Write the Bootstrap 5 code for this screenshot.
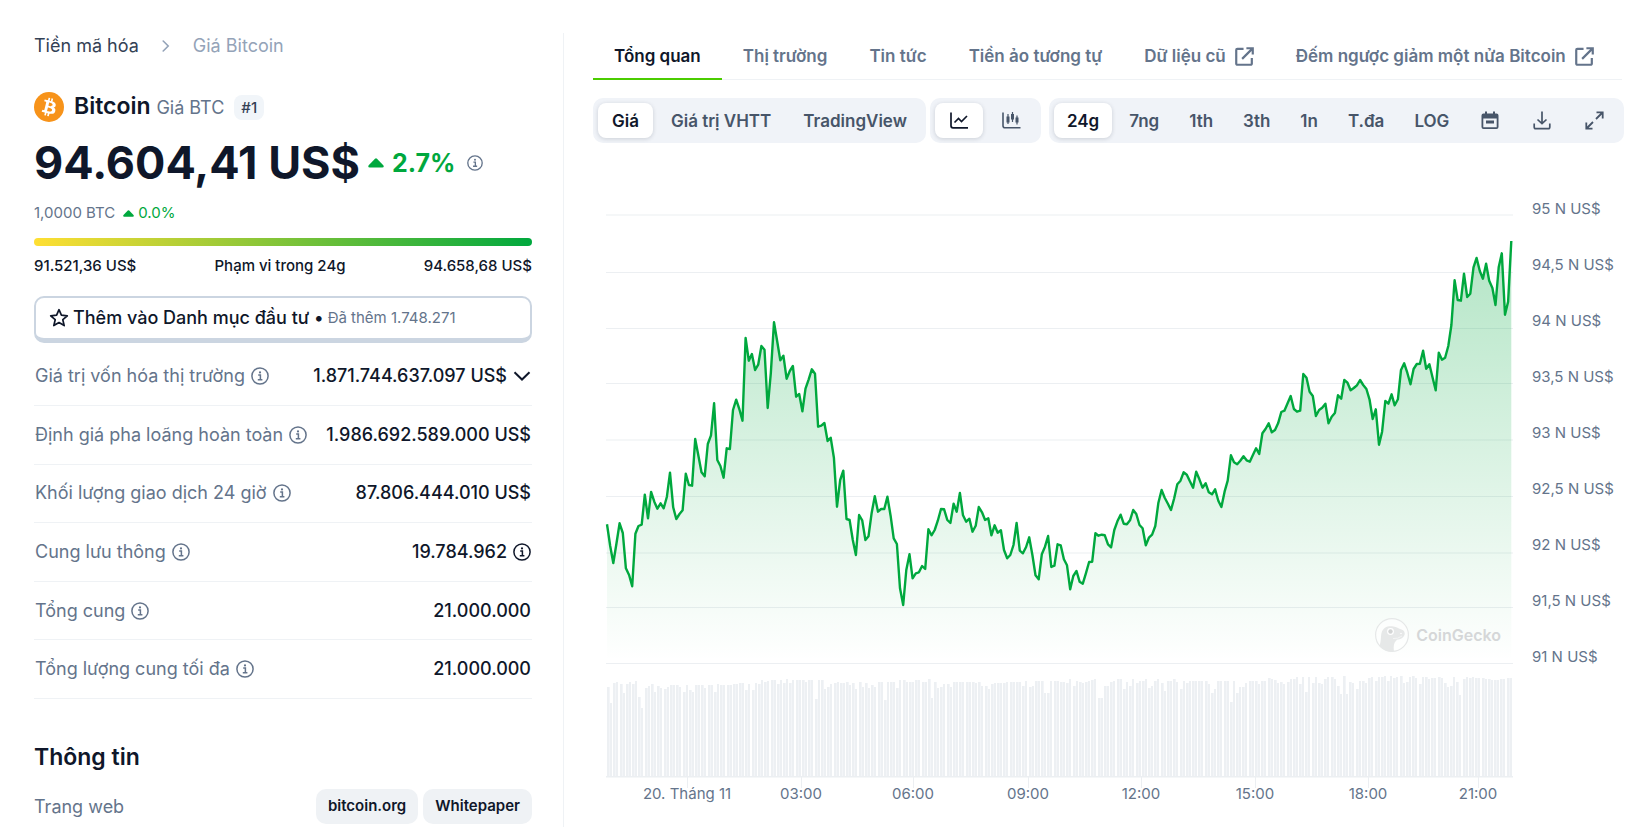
<!DOCTYPE html>
<html lang="vi">
<head>
<meta charset="utf-8">
<meta name="viewport" content="width=device-width, initial-scale=1">
<title>Giá Bitcoin</title>
<link href="https://cdn.jsdelivr.net/npm/bootstrap@5.3.0/dist/css/bootstrap.min.css" rel="stylesheet">
<style>
:root{--ink:#0f172a;--mid:#475569;--mute:#64748b;--pale:#94a3b8;--up:#00a83e;--fill:#eff2f5;--line:#eff2f5}
body{font-family:Inter,"Noto Sans",sans-serif;font-size:18px;line-height:24px;color:var(--ink);background:#fff}
a{color:inherit;text-decoration:none}
svg{flex:none;display:block}
.page{display:grid;grid-template-columns:564fr 1075fr;padding-top:33px;min-height:100vh;overflow:hidden}
.side{padding:1px 31px 0 34px;border-right:1px solid var(--line)}
.main{padding:0 17px 0 29px;min-width:0}
.crumbs{gap:23px;color:#334155}
.crumbs .here{color:var(--pale)}
.coin{gap:10px;margin-top:35px;height:28px}
.coin h1{font-size:23px;line-height:28px;font-weight:600;margin:0}
.coin h1 small{font-size:18px;font-weight:400;color:var(--mute)}
.rank{background:#f1f5f9;border-radius:8px;font-size:15px;font-weight:500;line-height:25px;padding:0 7px;color:#334155}
.price{font-size:45px;font-weight:700;line-height:56px}
.price-row{margin-top:14px}
.change{font-size:25px;font-weight:700;line-height:32px}
.up{color:var(--up)}
.mute{color:var(--mute)}
.inbtc{font-size:15px;line-height:22px;margin-top:11px}
.range-bar{height:8px;border-radius:4px;background:linear-gradient(90deg,#ffdf33,#00a83e);margin-top:14px}
.range-text{font-size:15px;font-weight:500;line-height:22px;margin-top:9px}
.follow{width:100%;margin-top:19px;height:47px;border:2px solid #cbd5e1;border-bottom-width:5px;border-radius:10px;background:#fff;padding:0 13px;font-weight:500;color:var(--ink);gap:4px}
.follow span{font-size:15px;font-weight:400;color:var(--mute)}
.stats{width:100%;height:351px;margin-top:5px}
.stats th,.stats td{border-bottom:1px solid var(--line);padding:0 1px;vertical-align:middle;font-weight:400}
.stats th{color:var(--mute)}
.stats td{font-weight:500}
.stats div{gap:6px}
.about{font-size:23px;font-weight:600;line-height:28px;margin:44px 0 18px}
.links{gap:5px}
.chip{background:var(--fill);border:0;border-radius:10px;height:35px;line-height:33px;padding:0 12px;font-size:15px;font-weight:600}
.tabs{height:47px;border-bottom:1px solid var(--line);font-size:17px}
.tabs a{height:47px;line-height:46px;padding:0 21px;font-weight:600;color:var(--mute);gap:9px;white-space:nowrap}
.tabs a.on{color:var(--ink);border-bottom:2px solid #4bcc00}
.controls{margin-top:18px;font-size:17px}
.seg{background:#f0f3f8;border-radius:10px;padding:5px;gap:4px}
.seg button{border:0;background:none;height:35px;border-radius:8px;padding:0 13px;font-weight:600;color:var(--mid);white-space:nowrap}
.seg button.on{background:#fff;color:var(--ink);box-shadow:0 1px 4px rgba(15,23,42,.16)}
.seg.kind button{padding:0 14px}
.seg .tool{padding:0 15px}
.chart{display:grid;grid-template-columns:1fr 109px;margin-top:38px;padding-left:13px}
.plot{min-width:0}
.plot svg.graph{width:100%;height:603px;overflow:visible}
.axis-x{display:grid;grid-template-columns:81fr 114fr 112fr 115fr 113fr 114fr 113fr 110fr 35fr;font-size:15px;line-height:20px;color:var(--mute)}
.axis-x span{display:flex;justify-content:center;width:0;white-space:nowrap}
.axis-x span:first-child{grid-column-start:2}
.axis-y{font-size:15px;line-height:56px;color:var(--mute);padding-left:19px}
.brand-tag{right:12px;top:437px;gap:7px;color:#d5d7d8;font-size:16px;font-weight:600}
</style>
</head>
<body>
<svg width="0" height="0" class="position-absolute" aria-hidden="true">
  <symbol id="info" viewBox="0 0 18 18"><circle cx="9" cy="9" r="8.1" fill="none" stroke="currentColor" stroke-width="1.5"/><path d="M7.2 8h2.2v4.4M6.8 12.7h4.6" fill="none" stroke="currentColor" stroke-width="1.5"/><circle cx="9" cy="5.4" r="1.1" fill="currentColor"/></symbol>
  <symbol id="out" viewBox="0 0 20 20"><path d="M9 2H2.5A1.2 1.2 0 0 0 1.300 3.200V17.500A1.200 1.200 0 0 0 2.500 18.700H16.500A1.200 1.200 0 0 0 17.700 17.500V11.500M12 1.300H18.700V8M18.300 1.700L7.500 12.500" fill="none" stroke="currentColor" stroke-width="2.3"/></symbol>
  <symbol id="tri" viewBox="0 0 16 10"><path d="M7 .7q1-.9 2 0l6.300 6.500q1.300 2.400-1 2.400H1.700q-2.300 0-1-2.400z" fill="currentColor"/></symbol>
</svg>

<div class="page">
  <aside class="side">
    <nav class="crumbs d-flex align-items-center" aria-label="breadcrumb">
      <a href="#">Tiền mã hóa</a>
      <svg width="8" height="12" viewBox="0 0 8 12"><path d="M1.200 1l5 5-5 5" fill="none" stroke="#94a3b8" stroke-width="1.600" stroke-linecap="round"/></svg>
      <span class="here">Giá Bitcoin</span>
    </nav>

    <div class="coin d-flex align-items-center">
      <svg width="30" height="30" viewBox="0 0 32 32"><circle cx="16" cy="16" r="16" fill="#f7931a"/><path fill="#fff" d="M23.189 14.02c.314-2.096-1.283-3.223-3.465-3.975l.708-2.84-1.728-.43-.69 2.765c-.454-.114-.92-.22-1.385-.326l.695-2.783L15.596 6l-.708 2.839c-.376-.086-.746-.17-1.104-.26l.002-.009-2.384-.595-.46 1.846s1.283.294 1.256.312c.7.175.826.638.805 1.006l-.806 3.235c.048.012.11.03.18.057l-.183-.045-1.13 4.532c-.086.212-.303.531-.793.41.018.025-1.256-.313-1.256-.313l-.858 1.978 2.250.561c.418.105.828.215 1.231.318l-.715 2.872 1.727.43.708-2.840c.472.127.93.245 1.378.357l-.706 2.828 1.728.43.715-2.866c2.948.558 5.164.333 6.097-2.333.752-2.146-.037-3.385-1.588-4.192 1.130-.26 1.980-1.003 2.207-2.538zm-3.950 5.538c-.533 2.147-4.148.986-5.320.695l.950-3.805c1.172.293 4.929.872 4.370 3.110zm.535-5.569c-.487 1.953-3.495.96-4.470.717l.860-3.450c.975.243 4.118.696 3.610 2.733z"/></svg>
      <h1>Bitcoin <small>Giá BTC</small></h1>
      <span class="rank">#1</span>
    </div>

    <div class="price-row d-flex align-items-center gap-2">
      <div class="price">94.604,41&nbsp;US$</div>
      <div class="change up d-flex align-items-center gap-2"><svg width="16" height="10"><use href="#tri"/></svg>2.7%</div>
      <svg class="mute ms-1" width="16" height="16" viewBox="0 0 18 18"><use href="#info"/></svg>
    </div>
    <div class="inbtc mute d-flex align-items-center gap-2">1,0000 BTC <span class="up d-flex align-items-center gap-1"><svg width="11" height="7" viewBox="0 0 16 10"><use href="#tri"/></svg>0.0%</span></div>

    <div class="range-bar"></div>
    <div class="range-text d-flex justify-content-between"><span>91.521,36 US$</span><span>Phạm vi trong 24g</span><span>94.658,68 US$</span></div>

    <button type="button" class="follow d-flex align-items-center">
      <svg width="20" height="20" viewBox="0 0 20 20"><path d="M10 1.700l2.400 5.500 5.900.6-4.500 3.900 1.400 5.900-5.200-3.100-5.200 3.100 1.400-5.900-4.500-3.900 5.900-.6z" fill="none" stroke="currentColor" stroke-width="1.700" stroke-linejoin="round"/></svg>
      Thêm vào Danh mục đầu tư • <span>Đã thêm 1.748.271</span>
    </button>

    <table class="stats">
      <tr><th scope="row"><div class="d-flex align-items-center">Giá trị vốn hóa thị trường <svg width="18" height="18"><use href="#info"/></svg></div></th><td><div class="d-flex align-items-center justify-content-end">1.871.744.637.097 US$ <svg width="18" height="10" viewBox="0 0 18 10"><path d="M1.500 1.200L9 8.500l7.500-7.300" fill="none" stroke="currentColor" stroke-width="2"/></svg></div></td></tr>
      <tr><th scope="row"><div class="d-flex align-items-center">Định giá pha loãng hoàn toàn <svg width="18" height="18"><use href="#info"/></svg></div></th><td class="text-end">1.986.692.589.000 US$</td></tr>
      <tr><th scope="row"><div class="d-flex align-items-center">Khối lượng giao dịch 24 giờ <svg width="18" height="18"><use href="#info"/></svg></div></th><td class="text-end">87.806.444.010 US$</td></tr>
      <tr><th scope="row"><div class="d-flex align-items-center">Cung lưu thông <svg width="18" height="18"><use href="#info"/></svg></div></th><td><div class="d-flex align-items-center justify-content-end">19.784.962 <svg width="18" height="18"><use href="#info"/></svg></div></td></tr>
      <tr><th scope="row"><div class="d-flex align-items-center">Tổng cung <svg width="18" height="18"><use href="#info"/></svg></div></th><td class="text-end">21.000.000</td></tr>
      <tr><th scope="row"><div class="d-flex align-items-center">Tổng lượng cung tối đa <svg width="18" height="18"><use href="#info"/></svg></div></th><td class="text-end">21.000.000</td></tr>
    </table>

    <h2 class="about">Thông tin</h2>
    <div class="links d-flex align-items-center">
      <span class="mute me-auto">Trang web</span>
      <a href="#" class="chip">bitcoin.org</a>
      <a href="#" class="chip">Whitepaper</a>
    </div>
  </aside>

  <main class="main">
    <nav class="tabs d-flex">
      <a href="#" class="on">Tổng quan</a>
      <a href="#">Thị trường</a>
      <a href="#">Tin tức</a>
      <a href="#">Tiền ảo tương tự</a>
      <a href="#" class="d-flex">Dữ liệu cũ <svg class="align-self-center" width="19" height="19"><use href="#out"/></svg></a>
      <a href="#" class="d-flex">Đếm ngược giảm một nửa Bitcoin <svg class="align-self-center" width="19" height="19"><use href="#out"/></svg></a>
    </nav>

    <div class="controls d-flex">
      <div class="seg kind d-flex me-1">
        <button type="button" class="on">Giá</button>
        <button type="button">Giá trị VHTT</button>
        <button type="button">TradingView</button>
      </div>
      <div class="seg d-flex me-2">
        <button type="button" class="on tool" aria-label="Biểu đồ đường"><svg width="18" height="17" viewBox="0 0 18 17"><path d="M1 .5v13.300q0 2 2 2h15M4.500 10.500l4-4 3 3 5.500-5.500" fill="none" stroke="currentColor" stroke-width="1.700"/></svg></button>
        <button type="button" class="tool" aria-label="Biểu đồ nến"><svg width="19" height="17" viewBox="0 0 19 17"><path d="M1 .5v13.300q0 2 2 2h15.500" fill="none" stroke="currentColor" stroke-width="1.600"/><path d="M6 2v10M10.500 0v10M15 3.500v9" stroke="currentColor" stroke-width="1.200"/><path d="M4.500 4.500h3v6h-3zM9 2h3v5.500H9zM13.500 5.500h3v5h-3z" fill="currentColor"/></svg></button>
      </div>
      <div class="seg d-flex justify-content-between flex-grow-1">
        <button type="button" class="on">24g</button>
        <button type="button">7ng</button>
        <button type="button">1th</button>
        <button type="button">3th</button>
        <button type="button">1n</button>
        <button type="button">T.đa</button>
        <button type="button">LOG</button>
        <button type="button" class="tool" aria-label="Chọn ngày"><svg width="18" height="19" viewBox="0 0 18 19"><path d="M2.500 2.500H4V.5h2v2h6v-2h2v2h1.500a2 2 0 0 1 2 2v11.500a2 2 0 0 1-2 2h-13a2 2 0 0 1-2-2V4.500a2 2 0 0 1 2-2zM2.300 7.500v8.700h13.400V7.500zM5 9.500h8v3H5z" fill="currentColor" fill-rule="evenodd"/></svg></button>
        <button type="button" class="tool" aria-label="Tải xuống"><svg width="18" height="19" viewBox="0 0 18 19"><path d="M9 .5v12M4.500 8.500L9 12.700l4.500-4.200M1.200 12.500v3.500q0 1.700 1.700 1.700h12.200q1.700 0 1.700-1.700v-3.500" fill="none" stroke="currentColor" stroke-width="1.700"/></svg></button>
        <button type="button" class="tool" aria-label="Toàn màn hình"><svg width="19" height="19" viewBox="0 0 19 19"><path d="M11.500 1.300h6.200v6.200M17.500 1.500l-6.500 6.500M7.500 17.700H1.300v-6.200M1.500 17.500L8 11" fill="none" stroke="currentColor" stroke-width="1.800"/></svg></button>
      </div>
    </div>

    <div class="chart">
      <div class="plot position-relative">
        <svg class="graph" viewBox="0 0 907 603" preserveAspectRatio="none" role="img" aria-label="Biểu đồ giá Bitcoin 24 giờ">
          <defs><linearGradient id="fade" gradientUnits="userSpaceOnUse" x1="0" y1="60" x2="0" y2="480"><stop offset="0" stop-color="#00a83e" stop-opacity=".3"/><stop offset="1" stop-color="#00a83e" stop-opacity="0"/></linearGradient></defs>
          <g id="grid" fill="#eceff2"></g>
          <g id="volume" shape-rendering="crispEdges"></g>
          <path id="area" fill="url(#fade)"/>
          <path id="price" fill="none" stroke="#00a83e" stroke-width="2.400" stroke-linejoin="round" vector-effect="non-scaling-stroke"/>
        </svg>
        <div class="brand-tag position-absolute d-flex align-items-center">
          <svg width="34" height="34" viewBox="0 0 34 34"><circle cx="17" cy="17" r="16.400" fill="#fff" fill-opacity=".6" stroke="#e6e8e8" stroke-width="1.200"/><path d="M4.500 28c2-6 1-9 2-13 1.500-6 7-7.500 12-6.500 3 .5 5 2 8 3 3.500 1.200 3.500 4 3 5.500-1 2.500-3.500 4.500-7.500 4.700-2.500 2.300-4 5-3 11.500A16 16 0 0 1 4.500 28z" fill="#e6e8e8"/><circle cx="15.500" cy="13.500" r="3.400" fill="#fff"/><circle cx="15.500" cy="13.500" r="2.200" fill="#d3d5d5"/><circle cx="26" cy="15.500" r=".8" fill="#fff"/><path d="M18 20.500q5 .5 9-2.500" stroke="#f4f5f5" fill="none"/></svg>
          CoinGecko
        </div>
        <div class="axis-x"><span>20. Tháng 11</span><span>03:00</span><span>06:00</span><span>09:00</span><span>12:00</span><span>15:00</span><span>18:00</span><span>21:00</span></div>
      </div>
      <div class="axis-y">
        <div>95 N US$</div><div>94,5 N US$</div><div>94 N US$</div><div>93,5 N US$</div><div>93 N US$</div><div>92,5 N US$</div><div>92 N US$</div><div>91,5 N US$</div><div>91 N US$</div>
      </div>
    </div>
  </main>
</div>

<script src="https://cdn.jsdelivr.net/npm/bootstrap@5.3.0/dist/js/bootstrap.bundle.min.js"></script>
<script>
// Five-minute samples over 24 hours, in thirds of a chart unit below each block's base.
const priceBlocks = [
  [129, [643,708,759,700,640,669,775,795,829,671,648,644,554,625,546,575,596,580,595,560,488,592,627,612,601,491,525,527,387,437,487,499,402,376,280,450,468,503,415,417,300,269,297,332,84,152,132,180,164,108,119,294,190,37,92,151,137,206,183,168,260,252,304,236,208,178,191,350,347,339,393,383,443,590,510,482,627,630,690,735,615,631,690,679,608,559,605,597,597,560,617]],
  [249, [325,342,475,525,420,373,445,430,427,408,417,298,316,300,272,237,238,270,279,221,245,189,256,275,266,305,287,231,247,270,265,316,286,308,301,360,385,375,345,279,362,370,351,322,375,436,448,373,350,318,411,407,343,346,388,406,478,438,423,455,461,430,396,395,310,317,314,316,343,352,300,274,254,281,283,271,240,252,285,295,346,323,314,288,218,180,203,221,240,205,163]],
  [159, [422,397,404,424,443,395,418,443,430,457,463,448,482,501,455,422,346,367,373,362,349,361,365,345,325,342,280,267,250,277,270,250,216,212,190,168,207,215,212,102,113,155,168,228,210,203,191,250,230,219,166,176,120,128,151,144,136,120,135,147,178,237,208,314,275,183,191,163,196,178,90,70]],
  [9, [548,583,537,522,521,482,536,523,562,601,488,509,503,468,405,271,330,332,251,321,311,232,204,243,266,221,272,294,345,232,190,374,335,153]]
];
const volumeBlocks = [
  [408, [141,189,129,126,132,159,132,126,132,122,171,204,144,137,132,156,137,144,147,141,136,136,136,141,156,136,151,156,136,136,136,144,136,136,156,132,136,136,136,136,133,133,129,129,151,132,151,129,132,121,126,122,121,121,132,121,129,118,129,121,121,121,121,126,121,121,178,121,121,147,141,132,129,126,129,129,126,136,129,147,126,141,129,144,136,141,126,126,181,126,126,126,144,121,121,126,126,126,121,121,126,126,118,174,126,144,141,132,132,141,126,126,126,126,126]],
  [348, [65,65,69,67,77,77,88,72,69,69,69,69,66,66,66,66,66,77,62,80,77,62,62,62,98,98,62,62,62,66,66,69,58,77,62,66,69,66,62,60,58,114,114,77,77,66,62,58,58,88,66,77,58,69,62,62,58,84,77,62,58,69,92,62,62,58,66,88,62,69,62,62,62,62,62,62,72,98,88,62,62,62,62,125,62,98,80,80,69,62,62,62,72,62,62,54,58,60,69,67,72,67,58,58,51,72,51,96,51,69,51,69,72,58,51,51,58,77,102,47,102]],
  [648, [366,369,388,362,362,369,354,351,362,351,351,347,362,347,354,351,347,369,366,351,347,354,372,351,351,358,354,354,351,354,369,381,377,351,366,405,358,351,354,351,354,354,354,358,358,361,361,361,358,358,354,354]]
];
const prices = priceBlocks.flatMap(([base, list]) => list.map(v => base + v / 3));
const volumes = volumeBlocks.flatMap(([base, list]) => list.map(v => (base - v) / 3));
const step = 904.3 / (prices.length - 1);
const line = prices.map((y, i) => (1 + i * step).toFixed(1) + ' ' + y.toFixed(1)).join('L');
document.getElementById('price').setAttribute('d', 'M' + line);
document.getElementById('area').setAttribute('d', 'M' + line + 'L905.3 482L1 482Z');

let marks = '';
for (const y of [33.500, 91, 147, 202, 258.500, 315, 371.500, 426, 482]) marks += `<rect x="0" y="${y}" width="907" height="1"/>`;
marks += '<rect x="0" y="595" width="907" height="1.500"/>';
for (const x of [81, 195, 307, 422, 535, 649, 762, 872]) marks += `<rect x="${x}" y="596" width="1" height="11"/>`;
document.getElementById('grid').innerHTML = marks;

const barStep = 906 / volumes.length;
document.getElementById('volume').innerHTML = volumes.map((h, i) => {
  const left = Math.round(1 + Math.floor(i / 2) * 2 * barStep) + (i % 2 ? 3 : 0);
  const top = 595 - h;
  return `<rect x="${left}" y="${top.toFixed(0)}" width="2" height="${h.toFixed(0)}" fill="#edf0f3"/>` +
    (i % 2 ? '' : `<rect x="${left + 2}" y="${top.toFixed(0)}" width="1" height="${h.toFixed(0)}" fill="#f3f5f8"/>`);
}).join('');
</script>
</body>
</html>
